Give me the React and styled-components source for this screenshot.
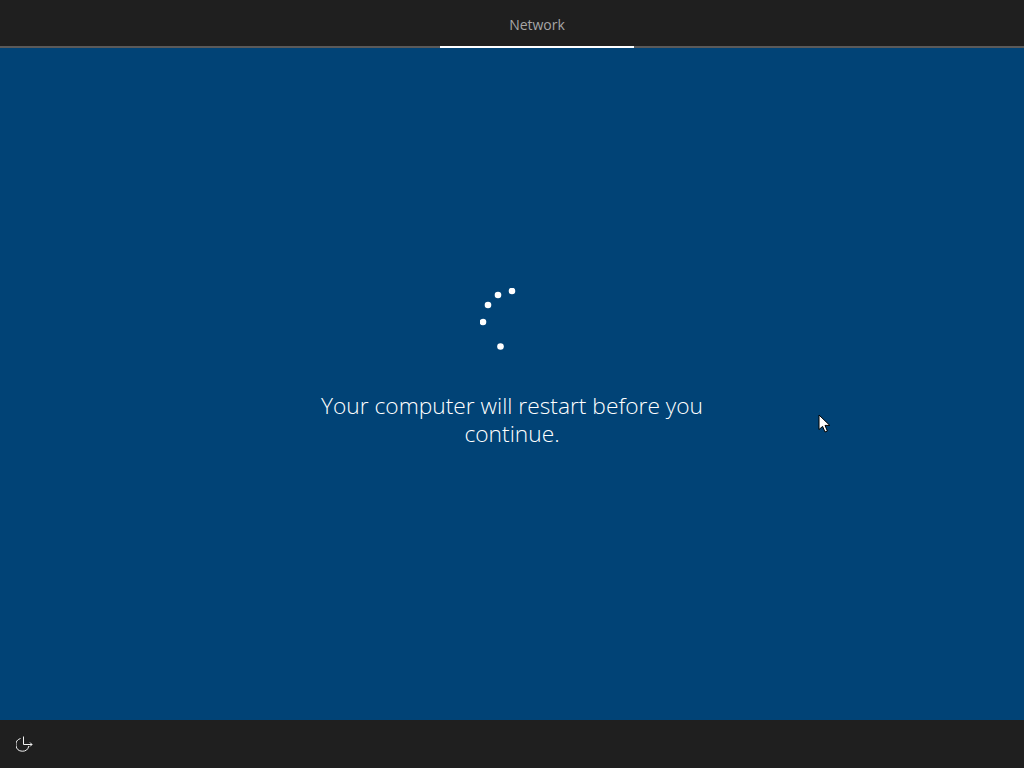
import React from "react";
import styled, { createGlobalStyle } from "styled-components";

const Global = createGlobalStyle`
  html, body { margin: 0; padding: 0; background: #1f1f1f; }
  #root { width: 1024px; height: 768px; overflow: hidden; }
`;

const Screen = styled.div`
  position: relative;
  width: 1024px;
  height: 768px;
  display: flex;
  flex-direction: column;
  font-family: "Open Sans", "Liberation Sans", sans-serif;
`;

const TopBar = styled.header`
  height: 48px;
  box-sizing: border-box;
  flex: none;
  display: flex;
  justify-content: center;
  background: #1f1f1f;
  border-bottom: 2px solid #5a5a5a;
`;

const Tab = styled.div`
  width: 194px;
  height: 48px;
  box-sizing: border-box;
  flex: none;
  padding-top: 15px;
  text-align: center;
  font-size: 14px;
  line-height: 20px;
  color: #a6a6a6;
  border-bottom: 2px solid #ffffff;
  margin-left: 50px;
`;

const Main = styled.main`
  flex: 1;
  display: flex;
  flex-direction: column;
  align-items: center;
  padding-top: 240px;
  background: #014376;
`;

const Spinner = styled.svg`
  display: block;
  width: 64px;
  height: 64px;
  flex: none;
`;

const Message = styled.p`
  width: 400px;
  margin: 39.5px 0 0;
  text-align: center;
  font-size: 22.75px;
  font-weight: 300;
  line-height: 28px;
  color: #ffffff;
`;

const BottomBar = styled.footer`
  height: 48px;
  flex: none;
  display: flex;
  align-items: center;
  padding-left: 16px;
  background: #1f1f1f;
`;

const Cursor = styled.svg`
  position: absolute;
  left: 818px;
  top: 414px;
  width: 14px;
  height: 20px;
`;

const dots = [
  [32, 3],
  [18, 7],
  [8, 17],
  [3, 34],
  [20.5, 58.5],
];

export default function App() {
  return (
    <Screen>
      <Global />
      <TopBar>
        <Tab>Network</Tab>
      </TopBar>
      <Main>
        <Spinner viewBox="0 0 64 64">
          {dots.map(([cx, cy]) => (
            <circle key={cx} cx={cx} cy={cy} r="3.3" fill="#fff" />
          ))}
        </Spinner>
        <Message>Your computer will restart before you continue.</Message>
      </Main>
      <BottomBar>
        <svg width="17" height="18" viewBox="0 0 17 18" fill="none" stroke="#f2f2f2" strokeWidth="1">
          <path d="M4.5 3.5A6.5 6.5 0 1 0 12.8 11" />
          <path d="M7.5 1.5V9.5H16" />
          <path d="M14 7.5L16 9.5L14 11.5" />
        </svg>
      </BottomBar>
      <Cursor viewBox="0 0 14 20">
        <path d="M1 1V15.5L4.6 12.4L7 18L9.4 17L7 11.4H11.8Z" fill="#fff" stroke="#000" strokeWidth="1" />
      </Cursor>
    </Screen>
  );
}
